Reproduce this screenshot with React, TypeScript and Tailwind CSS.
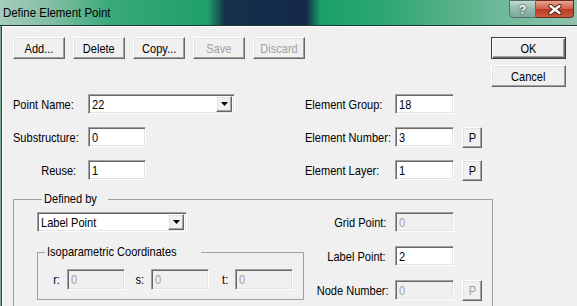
import type { ReactNode } from 'react'

// classic win32 3d edges
const raised =
  'bg-[#f0f0f0] border border-t-white border-l-white border-r-[#696969] border-b-[#696969] shadow-[inset_-1px_-1px_0_#a0a0a0,inset_1px_1px_0_#e3e3e3]'
const sunken =
  'border border-t-[#a0a0a0] border-l-[#a0a0a0] border-r-white border-b-white shadow-[inset_1px_1px_0_#696969,inset_-1px_-1px_0_#e3e3e3]'

function T({ children, className = '' }: { children: ReactNode; className?: string }) {
  return <span className={`inline-block whitespace-nowrap scale-x-[0.85] ${className}`}>{children}</span>
}

function Btn({ label, disabled, className = '' }: { label: string; disabled?: boolean; className?: string }) {
  return (
    <button className={`${raised} h-[22px] flex items-center justify-center ${className}`}>
      <T className={disabled ? 'text-[#a0a0a0]' : ''}>{label}</T>
    </button>
  )
}

function Field({ value, disabled, className = 'w-[59px] h-[20px]' }: { value: string; disabled?: boolean; className?: string }) {
  return (
    <div
      className={`${sunken} flex items-center pl-[3px] ${disabled ? 'bg-[#f0f0f0] text-[#a0a0a0]' : 'bg-white'} ${className}`}
    >
      <T className="origin-left">{value}</T>
    </div>
  )
}

function Combo({ value, className = '' }: { value: string; className?: string }) {
  return (
    <div className={`${sunken} bg-white h-[20px] flex items-center pl-[3px] pr-[2px] ${className}`}>
      <div className="flex-1">
        <T className="origin-left">{value}</T>
      </div>
      <div className={`${raised} w-[16px] h-[16px] flex items-center justify-center`}>
        <svg width="7" height="4" viewBox="0 0 7 4">
          <path d="M0 0h7L3.5 4z" fill="#000" />
        </svg>
      </div>
    </div>
  )
}

function Label({ text, className = '' }: { text: string; className?: string }) {
  return (
    <div className={className}>
      <T className="origin-left">{text}</T>
    </div>
  )
}

function RLabel({ text, className = '' }: { text: string; className?: string }) {
  return (
    <div className={`text-right ${className}`}>
      <T className="origin-right">{text}</T>
    </div>
  )
}

function PBtn({ disabled }: { disabled?: boolean }) {
  return <Btn label="P" disabled={disabled} className="ml-[8px] w-[20px] !h-[21px]" />
}

export default function App() {
  return (
    <div className="w-[577px] h-[306px] overflow-hidden flex flex-col font-['Liberation_Sans',Arial,sans-serif] text-[13px] leading-[15px] text-black">
      {/* title bar */}
      <div className="h-[26px] shrink-0 flex items-start border-b border-[#1d3b31] bg-[linear-gradient(90deg,#a6ccbd_0%,#82bea3_9%,#3aa97a_19%,#1f9f69_36%,#15304a_39%,#13284a_53%,#1aa067_55.5%,#2ca673_66%,#5cb28d_80%,#8fc3af_100%)]">
        <div className="h-[25px] flex items-center pl-[3px]">
          <T className="origin-left !scale-x-[0.88]">Define Element Point</T>
        </div>
        <div className="ml-auto mr-[3px] flex h-[18px]">
          <div className="w-[27px] h-full rounded-bl-[4px] border border-[#4f6f68] bg-[linear-gradient(#c3dbd3,#93b9ae_50%,#7ea99d)] flex items-center justify-center text-white font-bold text-[13px] [text-shadow:0_0_2px_#1d3b31,0_0_1px_#1d3b31]">
            ?
          </div>
          <div className="w-[38px] h-full rounded-br-[4px] border border-l-0 border-[#6b2a1e] bg-[linear-gradient(#e8a590,#d0604a_48%,#b93b22_52%,#cc5a3d)] flex items-center justify-center">
            <svg width="14" height="11" viewBox="0 0 14 11">
              <path d="M2.5 2l9 7M11.5 2l-9 7" stroke="#4a1a10" strokeWidth="4.2" strokeLinecap="round" />
              <path d="M2.5 2l9 7M11.5 2l-9 7" stroke="#fff" strokeWidth="2.4" strokeLinecap="round" />
            </svg>
          </div>
        </div>
      </div>

      {/* window frame + client area */}
      <div className="flex-1 min-h-0 flex border-l border-[#7fa898]">
        <div className="flex-1 border-l border-[#2b4a40]">
          <div className="h-full overflow-hidden border-l border-t border-white bg-[#f0f0f0] pl-[10px] pt-[10px]">
            <div className="flex">
              <div className="w-[478px]">
                <div className="flex gap-[8px]">
                  <Btn label="Add..." className="w-[52px]" />
                  <Btn label="Delete" className="w-[52px]" />
                  <Btn label="Copy..." className="w-[52px]" />
                  <Btn label="Save" disabled className="w-[52px]" />
                  <Btn label="Discard" disabled className="w-[52px]" />
                </div>

                <div className="mt-[35px] flex">
                  <div className="w-[292px] flex flex-col gap-[13px]">
                    <div className="h-[20px] flex items-center">
                      <Label text="Point Name:" className="w-[75px]" />
                      <Combo value="22" className="w-[147px]" />
                    </div>
                    <div className="h-[20px] flex items-center">
                      <Label text="Substructure:" className="w-[75px]" />
                      <Field value="0" className="w-[58px] h-[20px]" />
                    </div>
                    <div className="h-[20px] flex items-center">
                      <RLabel text="Reuse:" className="w-[75px] pr-[12px]" />
                      <Field value="1" className="w-[58px] h-[20px]" />
                    </div>
                  </div>
                  <div className="flex flex-col gap-[13px]">
                    <div className="h-[20px] flex items-center">
                      <Label text="Element Group:" className="w-[90px]" />
                      <Field value="18" />
                    </div>
                    <div className="h-[20px] flex items-center">
                      <Label text="Element Number:" className="w-[90px]" />
                      <Field value="3" />
                      <PBtn />
                    </div>
                    <div className="h-[20px] flex items-center">
                      <Label text="Element Layer:" className="w-[90px]" />
                      <Field value="1" />
                      <PBtn />
                    </div>
                  </div>
                </div>
              </div>

              <div className="flex flex-col gap-[6px]">
                <button className="w-[75px] h-[22px] bg-[#f0f0f0] border border-[#3c3c3c] shadow-[inset_1px_1px_0_#fff,inset_-1px_-1px_0_#696969,inset_-2px_-2px_0_#a0a0a0] flex items-center justify-center">
                  <T>OK</T>
                </button>
                <Btn label="Cancel" className="w-[75px]" />
              </div>
            </div>

            <fieldset className="mt-[12px] w-[480px] border border-[#a0a0a0] pl-[23px] pt-[6px] pb-[20px]">
              <legend className="ml-[5px] px-[2px] h-[14px] leading-[14px]">
                <T className="origin-left">Defined by</T>
              </legend>
              <div className="flex">
                <div className="w-[267px]">
                  <Combo value="Label Point" className="w-[150px]" />
                  <fieldset className="mt-[13px] w-[267px] border border-[#a0a0a0] pl-[3px] pt-[10px] pb-[9px]">
                    <legend className="ml-[4px] px-[2px] h-[14px] leading-[14px]">
                      <T className="origin-left">Isoparametric Coordinates</T>
                    </legend>
                    <div className="flex">
                      {['r:', 's:', 't:'].map((k) => (
                        <div key={k} className="flex items-center">
                          <RLabel text={k} className="w-[26px] pr-[7px]" />
                          <Field value="0" disabled className="w-[58px] h-[21px]" />
                        </div>
                      ))}
                    </div>
                  </fieldset>
                </div>

                <div className="flex flex-col gap-[14px]">
                  <div className="h-[20px] flex items-center">
                    <RLabel text="Grid Point:" className="w-[91px] pr-[9px]" />
                    <Field value="0" disabled />
                  </div>
                  <div className="h-[20px] flex items-center">
                    <RLabel text="Label Point:" className="w-[91px] pr-[9px]" />
                    <Field value="2" />
                  </div>
                  <div className="h-[20px] flex items-center">
                    <RLabel text="Node Number:" className="w-[91px] pr-[9px]" />
                    <Field value="0" disabled />
                    <PBtn disabled />
                  </div>
                </div>
              </div>
            </fieldset>
          </div>
        </div>
      </div>
    </div>
  )
}
